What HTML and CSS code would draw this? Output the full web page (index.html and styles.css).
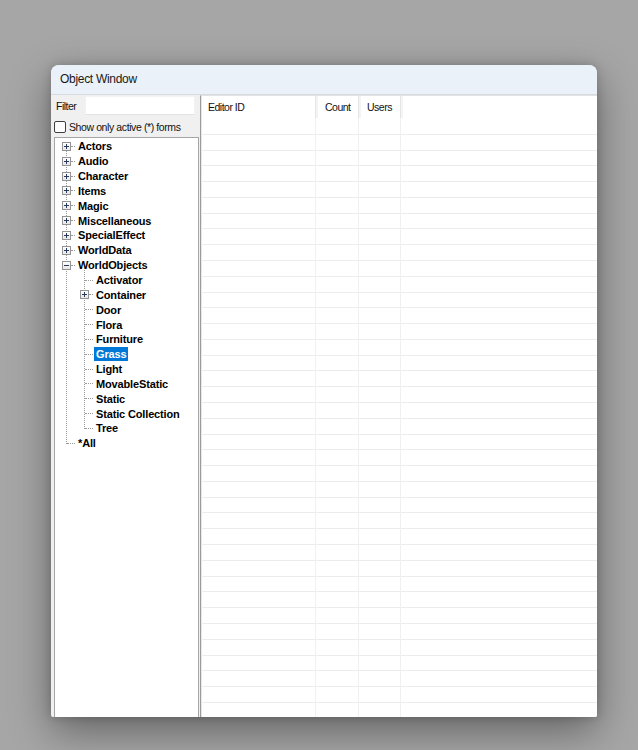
FILE: index.html
```html
<!DOCTYPE html>
<html lang="en">
<head>
<meta charset="utf-8">
<title>Object Window</title>
<link rel="stylesheet" href="styles.css">
</head>
<body>
<div class="window">
  <div class="titlebar">Object Window</div>
  <div class="content">
    <div class="left">
      <div class="filter-row">
        <span class="filter-label">Filter</span>
        <input class="filter-input" type="text">
      </div>
      <label class="check-row">
        <span class="checkbox"></span>
        <span class="check-label">Show only active (*) forms</span>
      </label>
      <div class="tree">
        <ul class="level root">
          <li><div class="node"><span class="gut"><span class="exp plus"></span><span class="tail"></span></span><span class="lbl">Actors</span></div></li>
          <li><div class="node"><span class="gut"><span class="exp plus"></span><span class="tail"></span></span><span class="lbl">Audio</span></div></li>
          <li><div class="node"><span class="gut"><span class="exp plus"></span><span class="tail"></span></span><span class="lbl">Character</span></div></li>
          <li><div class="node"><span class="gut"><span class="exp plus"></span><span class="tail"></span></span><span class="lbl">Items</span></div></li>
          <li><div class="node"><span class="gut"><span class="exp plus"></span><span class="tail"></span></span><span class="lbl">Magic</span></div></li>
          <li><div class="node"><span class="gut"><span class="exp plus"></span><span class="tail"></span></span><span class="lbl">Miscellaneous</span></div></li>
          <li><div class="node"><span class="gut"><span class="exp plus"></span><span class="tail"></span></span><span class="lbl">SpecialEffect</span></div></li>
          <li><div class="node"><span class="gut"><span class="exp plus"></span><span class="tail"></span></span><span class="lbl">WorldData</span></div></li>
          <li>
            <div class="node"><span class="gut"><span class="exp minus"></span><span class="tail"></span></span><span class="lbl">WorldObjects</span></div>
            <ul class="level child">
              <li><div class="node"><span class="gut"><span class="conn"></span></span><span class="lbl">Activator</span></div></li>
              <li><div class="node"><span class="gut"><span class="exp plus"></span><span class="tail"></span></span><span class="lbl">Container</span></div></li>
              <li><div class="node"><span class="gut"><span class="conn"></span></span><span class="lbl">Door</span></div></li>
              <li><div class="node"><span class="gut"><span class="conn"></span></span><span class="lbl">Flora</span></div></li>
              <li><div class="node"><span class="gut"><span class="conn"></span></span><span class="lbl">Furniture</span></div></li>
              <li><div class="node"><span class="gut"><span class="conn"></span></span><span class="lbl sel">Grass</span></div></li>
              <li><div class="node"><span class="gut"><span class="conn"></span></span><span class="lbl">Light</span></div></li>
              <li><div class="node"><span class="gut"><span class="conn"></span></span><span class="lbl">MovableStatic</span></div></li>
              <li><div class="node"><span class="gut"><span class="conn"></span></span><span class="lbl">Static</span></div></li>
              <li><div class="node"><span class="gut"><span class="conn"></span></span><span class="lbl">Static Collection</span></div></li>
              <li><div class="node"><span class="gut"><span class="conn"></span></span><span class="lbl">Tree</span></div></li>
            </ul>
          </li>
          <li><div class="node"><span class="gut"><span class="conn"></span></span><span class="lbl">*All</span></div></li>
        </ul>
      </div>
    </div>
    <div class="list">
      <div class="list-head">
        <div class="hcell c-id">Editor ID</div>
        <div class="hcell c-count">Count</div>
        <div class="hcell c-users">Users</div>
        <div class="hcell c-rest"></div>
      </div>
      <div class="list-body">
        <div class="col c-id"></div>
        <div class="col c-count"></div>
        <div class="col c-users"></div>
        <div class="col c-rest"></div>
      </div>
    </div>
  </div>
</div>
</body>
</html>
```
FILE: styles.css
```css
html, body {
  margin: 0;
  padding: 0;
}
body {
  background: #a6a6a6;
  width: 638px;
  height: 750px;
  overflow: hidden;
  font-family: "Liberation Sans", Arial, sans-serif;
}
.window {
  margin: 65px 0 0 51px;
  width: 546px;
  height: 652px;
  display: flex;
  flex-direction: column;
  border-radius: 8px 8px 2px 2px;
  background: #f0f0f0;
  box-shadow: 0 14px 40px rgba(0, 0, 0, 0.4), 0 0 10px rgba(0, 0, 0, 0.18);
  overflow: hidden;
}
.titlebar {
  flex: none;
  display: flex;
  align-items: center;
  padding: 0 0 2px 9px;
  box-sizing: border-box;
  height: 30px;
  background: #eaf1f8;
  border-bottom: 1px solid #d6dbe1;
  font-size: 12px;
  letter-spacing: -0.3px;
  color: #1a1a1a;
}
.content {
  flex: 1;
  display: flex;
  min-height: 0;
}
.left {
  width: 149px;
  flex: none;
  display: flex;
  flex-direction: column;
  padding-left: 3px;
  box-sizing: border-box;
}
.filter-row {
  display: flex;
  align-items: center;
  height: 20px;
  margin-top: 1px;
}
.filter-label {
  font-size: 10.5px;
  letter-spacing: -0.5px;
  color: #111;
  margin-left: 2px;
  width: 29px;
}
.filter-input {
  width: 110px;
  height: 19px;
  box-sizing: border-box;
  border: 1px solid #f3f3f3;
  border-bottom-color: #e4e4e4;
  background: #fff;
  margin: 0 0 1px 0;
  padding: 0;
  outline: none;
}
.check-row {
  display: flex;
  align-items: center;
  height: 15px;
  margin-top: 3px;
}
.checkbox {
  width: 12px;
  height: 12px;
  box-sizing: border-box;
  border: 1px solid #3f3f3f;
  border-radius: 2px;
  background: #fdfdfd;
  margin-right: 3px;
}
.check-label {
  font-size: 10.5px;
  letter-spacing: -0.4px;
  color: #111;
}
.tree {
  margin-top: 3px;
  flex: 1;
  width: 145px;
  box-sizing: border-box;
  border: 1px solid #a5a5a5;
  border-bottom: none;
  background: #fff;
  padding: 1px 0 0 3px;
}
.level {
  list-style: none;
  margin: 0;
  padding: 0;
  position: relative;
}
.level::before {
  content: "";
  position: absolute;
  left: 8px;
  top: 4px;
  bottom: 7px;
  border-left: 1px dotted #9a9a9a;
}
.child {
  margin-left: 18px;
}
.child::before {
  top: -3px;
}
.node {
  height: 14.85px;
  display: flex;
  align-items: center;
  position: relative;
}
.gut {
  width: 18px;
  flex: none;
  display: flex;
  align-items: center;
  height: 100%;
  position: relative;
}
.exp {
  width: 9px;
  height: 9px;
  margin-left: 4px;
  box-sizing: border-box;
  border: 1px solid #949494;
  background: linear-gradient(#ffffff, #e6e6e6);
  position: relative;
  z-index: 1;
}
.exp::before {
  content: "";
  position: absolute;
  left: 1px;
  top: 3px;
  width: 5px;
  height: 1px;
  background: #2a3a5a;
}
.plus::after {
  content: "";
  position: absolute;
  left: 3px;
  top: 1px;
  width: 1px;
  height: 5px;
  background: #2a3a5a;
}
.tail {
  flex: 1;
  border-top: 1px dotted #9a9a9a;
  margin-right: 1px;
}
.conn {
  margin-left: 9px;
  flex: 1;
  border-top: 1px dotted #9a9a9a;
  margin-right: 1px;
}
.lbl {
  font-size: 11px;
  font-weight: bold;
  letter-spacing: -0.15px;
  color: #000;
  padding: 0 2px;
  line-height: 14px;
  white-space: nowrap;
}
.lbl.sel {
  background: #0078d7;
  color: #fff;
}
.list {
  flex: 1;
  display: flex;
  flex-direction: column;
  background: #fff;
  border-left: 1px solid #9c9c9c;
  border-top: 1px solid #e3e3e3;
  box-shadow: inset 1px 0 0 #e6e6e6;
  min-width: 0;
}
.list-head {
  display: flex;
  height: 22px;
  flex: none;
}
.hcell {
  box-sizing: border-box;
  font-size: 10.5px;
  letter-spacing: -0.5px;
  color: #111;
  display: flex;
  align-items: center;
  padding-bottom: 1px;
  border-right: 1px solid #e5e5e5;
  box-shadow: 2px 0 0 #f4f4f4;
}
.hcell.c-rest {
  border-right: none;
  box-shadow: none;
}
.c-id {
  width: 115px;
  padding-left: 7px;
  flex: none;
}
.c-count {
  width: 43px;
  padding-left: 9px;
  flex: none;
}
.c-users {
  width: 42px;
  padding-left: 8px;
  flex: none;
}
.c-rest {
  flex: 1;
}
.list-body {
  flex: 1;
  display: flex;
  background-image: repeating-linear-gradient(to bottom, transparent 0, transparent 14.78px, #ececec 14.78px, #ececec 15.78px);
  background-position: 0 1px;
}
.col {
  box-sizing: border-box;
  border-right: 1px solid #f0f0f0;
}
.col.c-rest {
  border-right: none;
}
```
